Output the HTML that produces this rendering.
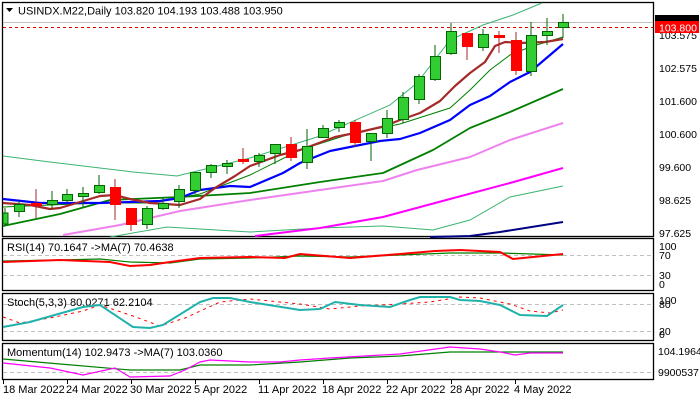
<!DOCTYPE html>
<html><head><meta charset="utf-8"><style>
html,body{margin:0;padding:0;background:#fff;width:700px;height:400px;overflow:hidden}
svg{display:block}
text{font-family:"Liberation Sans",sans-serif;font-size:11px}
.ax{font-size:10.5px}
</style></head><body>
<svg width="700" height="400" xmlns="http://www.w3.org/2000/svg">
<rect width="700" height="400" fill="#fff"/>
<g fill="none" stroke="#000" stroke-width="1.3">
<rect x="2.5" y="2.5" width="651" height="234"/>
<rect x="2.5" y="238.5" width="651" height="52"/>
<rect x="2.5" y="293.5" width="651" height="47"/>
<rect x="2.5" y="343.5" width="651" height="36"/>
</g>
<path d="M6 8 L13 8 L9.5 12 Z" fill="#000"/>
<text x="18" y="14.5" fill="#000">USINDX.M22,Daily  103.820 104.193 103.488 103.950</text>
<line x1="3" y1="22.5" x2="653" y2="22.5" stroke="#c0c0c0" stroke-width="1"/>
<line x1="3" y1="27.5" x2="653" y2="27.5" stroke="#d00" stroke-width="1" stroke-dasharray="3,3"/>
<g fill="none" stroke="#3cb371" stroke-width="1">
<polyline points="3,156 50,162 133,172 177,176 250,158 317,137 390,105 417,83 450,40 483,25 510,16 513,15 542,3"/>
<polyline points="110,237 167,227 250,232 320,228 383,226 433,230 470,220 510,197 563,186"/>
<polyline points="3,207 50,205 100,203 150,203 200,194 250,175 300,150 350,134 400,124 450,108 470,90 490,70 510,55 530,47 563,37" stroke="#008000"/>
</g>
<g fill="none" stroke-linejoin="round">
<polyline stroke="#000080" stroke-width="2" points="430,237 470,236 500,232 563,222"/>
<polyline stroke="#ff00ff" stroke-width="2" points="255,236 320,228 383,217 450,199 510,183 563,168"/>
<polyline stroke="#ee82ee" stroke-width="2" points="63,235 120,225 180,211 250,200 320,190 383,181 417,170 470,157 510,140 563,123"/>
<polyline stroke="#008000" stroke-width="1.8" points="3,226 60,214 110,200 180,197 250,193 320,182 383,173 433,150 470,128 510,112 563,89"/>
<polyline stroke="#0000ff" stroke-width="2.2" points="3,199 40,203 100,203 160,201 180,198 200,190 230,186 250,187 283,173 300,163 330,151 380,141 400,139 420,133 450,120 470,105 490,96 510,82 530,72 563,44"/>
<polyline stroke="#a52a2a" stroke-width="2.2" points="3,203 30,205 50,209 60,208 100,196 115,195 130,199 150,203 180,205 200,199 215,188 235,176 250,166 280,155 300,150 335,137 360,132 385,126 400,120 420,113 440,101 455,86 470,73 485,62 495,46 505,42 520,43 545,42 563,39"/>
</g>
<g stroke-width="1">
<g stroke="#006400" fill="#32cd32">
<line x1="5" y1="208" x2="5" y2="226"/><rect x="3" y="213" width="5" height="11"/>
<line x1="19" y1="201" x2="19" y2="217"/><rect x="14.5" y="204.5" width="10" height="7"/>
<line x1="52" y1="191" x2="52" y2="209"/><rect x="47.5" y="200.5" width="10" height="4"/>
<line x1="67" y1="189" x2="67" y2="202"/><rect x="62.5" y="194.5" width="10" height="6"/>
<line x1="83" y1="187" x2="83" y2="207"/><rect x="78.5" y="193.5" width="10" height="3"/>
<line x1="99" y1="175" x2="99" y2="194"/><rect x="94.5" y="185.5" width="10" height="7"/>
<line x1="147" y1="206" x2="147" y2="229"/><rect x="142.5" y="208.5" width="10" height="16"/>
<line x1="163" y1="197" x2="163" y2="210"/><rect x="158.5" y="203.5" width="10" height="5"/>
<line x1="179" y1="185" x2="179" y2="208"/><rect x="174.5" y="189.5" width="10" height="12"/>
<line x1="195" y1="172" x2="195" y2="194"/><rect x="190.5" y="172.5" width="10" height="18"/>
<line x1="211" y1="164" x2="211" y2="178"/><rect x="206.5" y="165.5" width="10" height="7"/>
<line x1="227" y1="160" x2="227" y2="174"/><rect x="222.5" y="163.5" width="10" height="3"/>
<line x1="259" y1="153" x2="259" y2="167"/><rect x="254.5" y="155.5" width="10" height="6"/>
<line x1="275" y1="144" x2="275" y2="164"/><rect x="270.5" y="144.5" width="10" height="9"/>
<line x1="307" y1="129" x2="307" y2="169"/><rect x="302.5" y="146.5" width="10" height="16"/>
<line x1="323" y1="125" x2="323" y2="138"/><rect x="318.5" y="128.5" width="10" height="9"/>
<line x1="339" y1="120" x2="339" y2="132"/><rect x="334.5" y="122.5" width="10" height="5"/>
<line x1="371" y1="133" x2="371" y2="161"/><rect x="366.5" y="133.5" width="10" height="8"/>
<line x1="387" y1="110" x2="387" y2="138"/><rect x="382.5" y="118.5" width="10" height="15"/>
<line x1="403" y1="92" x2="403" y2="123"/><rect x="398.5" y="97.5" width="10" height="22"/>
<line x1="419" y1="74" x2="419" y2="104"/><rect x="414.5" y="76.5" width="10" height="23"/>
<line x1="435" y1="45" x2="435" y2="81"/><rect x="430.5" y="56.5" width="10" height="23"/>
<line x1="451" y1="23" x2="451" y2="55"/><rect x="446.5" y="31.5" width="10" height="22"/>
<line x1="483" y1="29" x2="483" y2="51"/><rect x="478.5" y="34.5" width="10" height="13"/>
<line x1="531" y1="22" x2="531" y2="76"/><rect x="526.5" y="35.5" width="10" height="36"/>
<line x1="547" y1="18" x2="547" y2="45"/><rect x="542.5" y="31.5" width="10" height="4"/>
<line x1="563" y1="14" x2="563" y2="38"/><rect x="558.5" y="22.5" width="10" height="5"/>
</g>
<g stroke="#a52a2a" fill="#ff0000">
<line x1="36" y1="189" x2="36" y2="218"/><rect x="31" y="203" width="11" height="3" stroke="none"/>
<line x1="115" y1="179" x2="115" y2="220"/><rect x="110" y="187" width="11" height="18" stroke="none"/>
<line x1="131" y1="208" x2="131" y2="231"/><rect x="126" y="208" width="11" height="17" stroke="none"/>
<line x1="243" y1="148" x2="243" y2="164"/><rect x="238" y="159" width="11" height="3" stroke="none"/>
<line x1="291" y1="137" x2="291" y2="161"/><rect x="286" y="144" width="11" height="14" stroke="none"/>
<line x1="355" y1="120" x2="355" y2="147"/><rect x="350" y="122" width="11" height="21" stroke="none"/>
<line x1="467" y1="33" x2="467" y2="60"/><rect x="462" y="33" width="11" height="14" stroke="none"/>
<line x1="499" y1="31" x2="499" y2="53"/><rect x="494" y="35" width="11" height="3" stroke="none"/>
<line x1="516" y1="32" x2="516" y2="75"/><rect x="511" y="40" width="11" height="31" stroke="none"/>
</g>
</g>
<g fill="#000" class="ax">
<text class="ax" x="659" y="39">103.575</text>
<text class="ax" x="659" y="72">102.575</text>
<text class="ax" x="659" y="105">101.600</text>
<text class="ax" x="659" y="138">100.600</text>
<text class="ax" x="659" y="171">99.600</text>
<text class="ax" x="659" y="204">98.625</text>
<text class="ax" x="659" y="237">97.625</text>
</g>
<rect x="655" y="15" width="44" height="7" fill="#000"/>
<rect x="655" y="21" width="44" height="12" fill="#ff0000"/>
<text class="ax" x="659" y="31.5" fill="#fff">103.800</text>
<g stroke="#c0c0c0" stroke-dasharray="4,3"><line x1="3" y1="255.5" x2="653" y2="255.5"/><line x1="3" y1="275.5" x2="653" y2="275.5"/>
<line x1="3" y1="304.5" x2="653" y2="304.5"/><line x1="3" y1="331.5" x2="653" y2="331.5"/><line x1="3" y1="372.5" x2="653" y2="372.5"/></g>
<text x="7" y="251" fill="#000">RSI(14) 70.1647  -&gt;MA(7) 70.4638</text>
<polyline fill="none" stroke="#008000" stroke-width="1.2" points="3,261 60,260 100,259 130,262 170,263 200,259 250,258 300,256 350,257 400,255 450,253 500,253 563,255"/>
<polyline fill="none" stroke="#ff0000" stroke-width="2" points="3,262 60,260 110,262 130,266 150,265 170,262 200,258 250,257 285,258 300,254 350,258 400,254 435,251 460,250 500,252 513,259 533,257 563,254"/>
<g fill="#000"><text class="ax" x="659" y="250">100</text><text class="ax" x="659" y="259">70</text><text class="ax" x="659" y="279">30</text><text class="ax" x="659" y="288">0</text></g>
<text x="7" y="306" fill="#000">Stoch(5,3,3) 80.0271 62.2104</text>
<polyline fill="none" stroke="#ff0000" stroke-width="1" stroke-dasharray="3,4" points="3,317 20,323 50,318 83,311 100,305 133,316 160,326 185,318 220,302 250,299 300,304 330,309 360,306 400,304 430,302 460,297 480,298 510,304 530,311 550,313 563,310"/>
<polyline fill="none" stroke="#20b2aa" stroke-width="2" points="3,327 30,322 83,307 100,305 133,327 150,328 163,325 200,302 213,298 230,298 250,302 300,310 320,309 335,302 360,305 390,307 410,300 420,297 450,297 460,300 480,301 500,305 520,315 547,316 563,305"/>
<g fill="#000"><text class="ax" x="659" y="304">100</text><text class="ax" x="659" y="308">80</text><text class="ax" x="659" y="335">20</text><text class="ax" x="659" y="338">0</text></g>
<text x="7" y="356" fill="#000">Momentum(14) 102.9473  -&gt;MA(7) 103.0360</text>
<polyline fill="none" stroke="#008000" stroke-width="1.2" points="3,359 60,364 130,370 180,370 200,365 250,365 300,362 350,358 400,356 450,352 500,352 563,352"/>
<polyline fill="none" stroke="#ff00ff" stroke-width="1.2" points="3,363 50,368 83,375 115,368 130,377 170,376 185,370 200,362 210,360 250,362 280,362 300,360 330,358 400,354 450,347 480,349 500,352 515,355 530,353 563,353"/>
<g fill="#000"><text class="ax" x="658" y="355">104.1964</text><text class="ax" x="658" y="376">9900537</text></g>
<g stroke="#000"><line x1="3.5" y1="380" x2="3.5" y2="384"/><line x1="67.5" y1="380" x2="67.5" y2="384"/><line x1="131.5" y1="380" x2="131.5" y2="384"/><line x1="195.5" y1="380" x2="195.5" y2="384"/><line x1="259.5" y1="380" x2="259.5" y2="384"/><line x1="323.5" y1="380" x2="323.5" y2="384"/><line x1="387.5" y1="380" x2="387.5" y2="384"/><line x1="451.5" y1="380" x2="451.5" y2="384"/><line x1="515.5" y1="380" x2="515.5" y2="384"/></g>
<g fill="#000">
<text x="3" y="393">18 Mar 2022</text><text x="66" y="393">24 Mar 2022</text><text x="130" y="393">30 Mar 2022</text><text x="194" y="393">5 Apr 2022</text><text x="258" y="393">11 Apr 2022</text><text x="322" y="393">18 Apr 2022</text><text x="386" y="393">22 Apr 2022</text><text x="450" y="393">28 Apr 2022</text><text x="514" y="393">4 May 2022</text>
</g>
</svg>
</body></html>
